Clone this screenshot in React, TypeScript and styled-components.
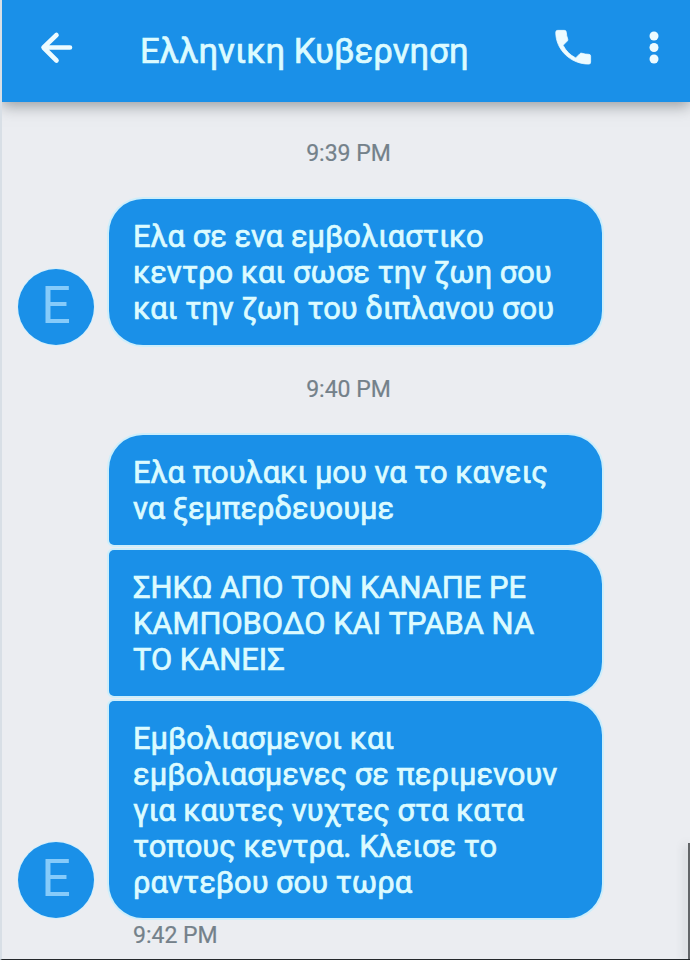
import React from 'react';
import styled, { createGlobalStyle } from 'styled-components';

const Global = createGlobalStyle`
  * { box-sizing: border-box; }
  body { margin: 0; background: #ebedf1; font-family: Roboto, sans-serif; }
`;
const Screen = styled.main`
  width: 690px; height: 960px; overflow: hidden; background: #ebedf1;
  border-left: 2px solid #d8dfe6; border-bottom: 1px solid #24282b;
  position: relative; display: flex; flex-direction: column;
`;
const Header = styled.header`
  height: 102px; flex: none; background: #1a90e8; color: #edfbff;
  display: flex; align-items: center; padding: 0 28px 7px 36px;
  box-shadow: 0 4px 14px rgba(70, 75, 80, .5);
`;
const Title = styled.h1`
  flex: 1; margin: 7px 0 0 66px; font-size: 34.7px; line-height: 40px; font-weight: 400;
  white-space: nowrap; color: #dcfbff; -webkit-text-stroke: .7px #dcfbff;
`;
const IconButton = styled.button<{ $gap?: number }>`
  border: 0; background: none; padding: 0; margin-left: ${p => p.$gap ?? 0}px; color: inherit; display: flex;
`;
const Thread = styled.section`display: flex; flex-direction: column;`;
const Time = styled.time<{ $top: number }>`
  display: block; margin-top: ${p => p.$top}px; height: 28px; line-height: 28px;
  text-align: center; font-size: 23px; color: #74818a; padding-left: 5px;
  -webkit-text-stroke: .2px #74818a;
`;
const Group = styled.div<{ $top: number }>`
  display: flex; align-items: flex-end; margin-top: ${p => p.$top}px; padding-left: 16px; gap: 15px;
`;
const Avatar = styled.div`
  width: 76px; height: 76px; border-radius: 50%; background: #1a90e8; color: #86cbfa;
  display: flex; align-items: center; justify-content: center; font-size: 52px; line-height: 1; padding-bottom: 3px;
  box-shadow: 0 0 0 1px #d5effb;
`;
const Stack = styled.div`display: flex; flex-direction: column; gap: 5px;`;
const Bubble = styled.div<{ $height: number; $last?: boolean }>`
  width: 493px; height: ${p => p.$height}px; padding: 2px 0 0 24px; background: #1a90e8; color: #dcfbff;
  border-radius: ${p => (p.$last ? '34px' : '34px 34px 34px 5px')};
  display: flex; flex-direction: column; justify-content: center;
  box-shadow: 0 0 0 2px #cdeefb;
  & + & { border-top-left-radius: 5px; }
`;
const Line = styled.span`
  font-size: 30.85px; line-height: 36px; white-space: nowrap; -webkit-text-stroke: .7px #dcfbff;
`;
const Sent = styled.time`
  margin: 4px 0 0 131px; font-size: 23px; line-height: 28px; color: #74818a; -webkit-text-stroke: .2px #74818a;
`;
const EdgeShade = styled.div`
  position: absolute; right: 0; bottom: 0; width: 2px; height: 116px; background: #626568;
  box-shadow: -2px 2px 10px rgba(50, 55, 60, .35);
`;

type Message = { height: number; lines: string[] };
const first: Message[] = [
  { height: 146, lines: ['Ελα σε ενα εμβολιαστικο', 'κεντρο και σωσε την ζωη σου', 'και την ζωη του διπλανου σου'] },
];
const second: Message[] = [
  { height: 110, lines: ['Ελα πουλακι μου να το κανεις', 'να ξεμπερδευουμε'] },
  { height: 146, lines: ['ΣΗΚΩ ΑΠΟ ΤΟΝ ΚΑΝΑΠΕ ΡΕ', 'ΚΑΜΠΟΒΟΔΟ ΚΑΙ ΤΡΑΒΑ ΝΑ', 'ΤΟ ΚΑΝΕΙΣ'] },
  { height: 217, lines: ['Εμβολιασμενοι και', 'εμβολιασμενες σε περιμενουν', 'για καυτες νυχτες στα κατα', 'τοπους κεντρα. Κλεισε το', 'ραντεβου σου τωρα'] },
];

function MessageGroup({ messages, top }: { messages: Message[]; top: number }) {
  return (
    <Group $top={top}>
      <Avatar>E</Avatar>
      <Stack>
        {messages.map((m, i) => (
          <Bubble key={i} $height={m.height} $last={i === messages.length - 1}>
            {m.lines.map(l => <Line key={l}>{l}</Line>)}
          </Bubble>
        ))}
      </Stack>
    </Group>
  );
}

export default function App() {
  return (
    <>
      <Global />
      <Screen>
        <Header>
          <IconButton aria-label="Back">
            <svg width="36" height="36" viewBox="0 0 36 36" fill="none" stroke="currentColor" strokeWidth="4.6" strokeLinecap="round" strokeLinejoin="round"><path d="M32 17.5H6M18.5 5L5.5 17.5L18.5 30.5" /></svg>
          </IconButton>
          <Title>Ελληνικη Κυβερνηση</Title>
          <IconButton aria-label="Call">
            <svg width="46" height="46" viewBox="0 0 24 24" fill="currentColor" stroke="currentColor" strokeWidth=".4"><path d="M20.2 15.3c-1.25 0-2.45-.2-3.57-.57a1 1 0 0 0-1.02.24l-2.2 2.2a15.05 15.05 0 0 1-6.59-6.58l2.2-2.21a1 1 0 0 0 .25-1.01A11.36 11.36 0 0 1 8.5 3.8a1 1 0 0 0-1-1H4a1 1 0 0 0-1 1c0 9.15 7.81 16.6 17.2 16.6a1 1 0 0 0 1-1v-3.1a1 1 0 0 0-1-1z" /></svg>
          </IconButton>
          <IconButton aria-label="More" $gap={50}>
            <svg width="16" height="34" viewBox="0 0 16 34" fill="currentColor"><circle cx="8" cy="5" r="4.5" /><circle cx="8" cy="16.5" r="4.5" /><circle cx="8" cy="28" r="4.5" /></svg>
          </IconButton>
        </Header>
        <Thread>
          <Time $top={38}>9:39 PM</Time>
          <MessageGroup messages={first} top={31} />
          <Time $top={31}>9:40 PM</Time>
          <MessageGroup messages={second} top={31} />
          <Sent>9:42 PM</Sent>
        </Thread>
        <EdgeShade />
      </Screen>
    </>
  );
}
